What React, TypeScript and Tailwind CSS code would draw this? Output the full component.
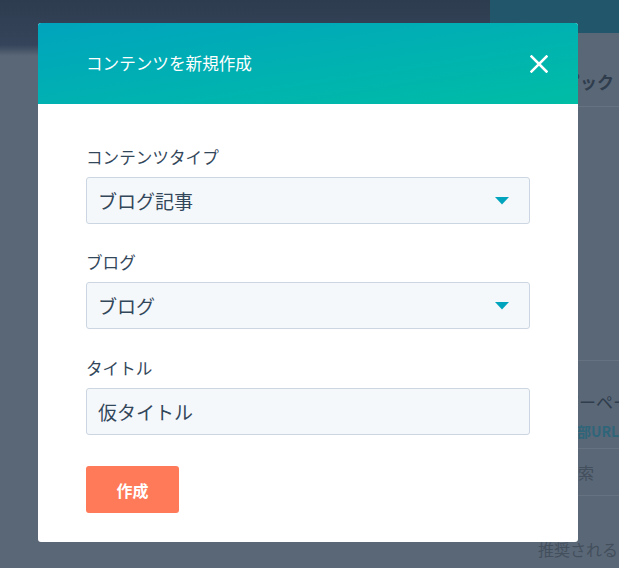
import React from "react"

const font = { fontFamily: '"Noto Sans CJK JP", "Noto Sans", sans-serif' }

function Caret() {
    return (
        <svg width="14" height="8" viewBox="0 0 14 8" className="shrink-0">
            <path d="M0 0 L14 0 L7 7.5 Z" fill="#00a4bd" />
        </svg>
    )
}

function SelectBox({ value }: { value: string }) {
    return (
        <div className="flex h-[47px] items-center justify-between rounded-[3px] border border-[#cbd6e2] bg-[#f5f8fa] pl-[11px] pr-[20px]">
            <span className="text-[19px] leading-none text-[#33475b]">{value}</span>
            <Caret />
        </div>
    )
}

function Field({ label, children, className }: { label: string; children: React.ReactNode; className?: string }) {
    return (
        <div className={className}>
            <div className="mb-[8px] text-[16.6px] leading-[24px] text-[#33475b]">{label}</div>
            {children}
        </div>
    )
}

export default function App() {
    return (
        <div className="relative h-[568px] w-[619px] overflow-hidden bg-[#5a6777]" style={font}>
            {/* page behind the overlay */}
            <div className="flex h-full">
                <div className="flex-1">
                    <div className="h-[56px] bg-gradient-to-b from-[#2e3c4f] via-[#35445a] via-80% to-[#5a6777]" />
                </div>
                <div className="flex w-[129px] flex-col">
                    <div className="h-[33px] bg-[#22566b]" />
                    <div className="flex h-[74px] items-end border-b border-[#66727f] pb-[12px] pl-[56px] text-[17px] leading-[24px] font-bold whitespace-nowrap text-[#2f3d4d]">
                        トピック（
                    </div>
                    <div className="h-[254px] border-b border-[#66727f]" />
                    <div className="flex h-[88px] flex-col border-b border-[#66727f] pt-[29px] pl-[55px] whitespace-nowrap">
                        <span className="text-[17px] leading-[24px] text-[#2f3d4d]">カバーページ</span>
                        <span className="mt-[7px] ml-[18px] text-[14px] leading-[20px] font-bold text-[#2e6579]">外部URL</span>
                    </div>
                    <div className="flex h-[47px] items-center border-b border-[#66727f] pl-[72px] text-[16px] whitespace-nowrap text-[#434f5c]">
                        検索
                    </div>
                    <div className="pt-[41px] pl-[48px] text-[16px] leading-[24px] whitespace-nowrap text-[#434f5c]">
                        推奨される
                    </div>
                </div>
            </div>

            {/* modal */}
            <div className="absolute top-[23px] left-[38px] w-[540px] overflow-hidden rounded-[3px] bg-white">
                <div className="flex h-[81px] items-center justify-between bg-gradient-to-br from-[#00a4bd] to-[#00bda5] pr-[30px] pl-[48px]">
                    <span className="text-[16.6px] text-white">コンテンツを新規作成</span>
                    <svg width="18" height="18" viewBox="0 0 18 18">
                        <path d="M1.5 1.5 L16.5 16.5 M16.5 1.5 L1.5 16.5" stroke="white" strokeWidth="2.5" strokeLinecap="square" />
                    </svg>
                </div>
                <div className="px-[48px] pt-[41px] pb-[29px]">
                    <Field label="コンテンツタイプ">
                        <SelectBox value="ブログ記事" />
                    </Field>
                    <Field label="ブログ" className="mt-[26px]">
                        <SelectBox value="ブログ" />
                    </Field>
                    <Field label="タイトル" className="mt-[27px]">
                        <div className="flex h-[47px] items-center rounded-[3px] border border-[#cbd6e2] bg-[#f5f8fa] pl-[11px]">
                            <span className="text-[19px] leading-none text-[#33475b]">仮タイトル</span>
                        </div>
                    </Field>
                    <button className="mt-[31px] flex h-[47px] w-[93px] items-center justify-center rounded-[3px] bg-[#ff7a59] text-[16px] font-bold text-white">
                        作成
                    </button>
                </div>
            </div>
        </div>
    )
}
